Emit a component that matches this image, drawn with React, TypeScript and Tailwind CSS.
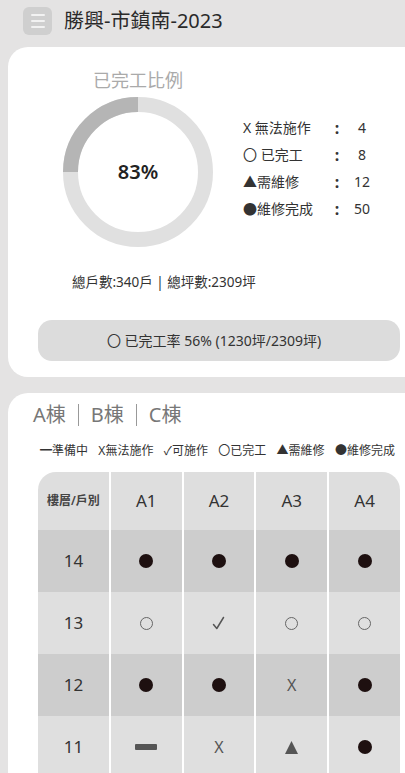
import React from 'react';

type Mark = 'dot' | 'circle' | 'check' | 'x' | 'tri' | 'dash';

const floors: { floor: number; cells: Mark[] }[] = [
  { floor: 14, cells: ['dot', 'dot', 'dot', 'dot'] },
  { floor: 13, cells: ['circle', 'check', 'circle', 'circle'] },
  { floor: 12, cells: ['dot', 'dot', 'x', 'dot'] },
  { floor: 11, cells: ['dash', 'x', 'tri', 'dot'] },
];

const stats = [
  { label: 'X 無法施作', value: '4' },
  { label: '〇 已完工', value: '8' },
  { label: '▲需維修', value: '12' },
  { label: '●維修完成', value: '50' },
];

const legend = ['━準備中', 'X無法施作', '✓可施作', '〇已完工', '▲需維修', '●維修完成'];

const MarkIcon: React.FC<{ mark: Mark }> = ({ mark }) => {
  switch (mark) {
    case 'dot':
      return <span className="block h-[14px] w-[14px] rounded-full bg-[#1e1010]" />;
    case 'circle':
      return <span className="block h-[13px] w-[13px] rounded-full border border-[#666]" />;
    case 'check':
      return (
        <svg width="13" height="14" viewBox="0 0 13 14" fill="none">
          <path d="M1.5 8.5 L4.8 12.5 L11.5 1.5" stroke="#555" strokeWidth="1.5" strokeLinecap="round" strokeLinejoin="round" />
        </svg>
      );
    case 'x':
      return <span className="text-[16px] leading-none text-[#555]">X</span>;
    case 'tri':
      return (
        <svg width="13" height="13" viewBox="0 0 13 13">
          <polygon points="6.5,0 13,13 0,13" fill="#555" />
        </svg>
      );
    case 'dash':
      return <span className="block h-[6px] w-[22px] rounded-[1px] bg-[#555]" />;
  }
};

export default function App() {
  return (
    <div className="min-h-screen bg-[#e4e3e3] font-['Noto_Sans','Noto_Sans_CJK_TC',sans-serif] text-[#333]">
      {/* Header */}
      <header className="h-[47px] pl-[23px] pt-[7px]">
        <div className="flex h-[28px] items-center gap-[12px]">
          <div className="flex h-[28px] w-[29px] flex-col items-center justify-center gap-[4px] rounded-[6px] bg-[#cfcfcf]">
            <span className="h-[2px] w-[14px] rounded bg-[#f2f2f2]" />
            <span className="h-[2px] w-[14px] rounded bg-[#f2f2f2]" />
            <span className="h-[2px] w-[14px] rounded bg-[#f2f2f2]" />
          </div>
          <h1 className="text-[20px] leading-none text-[#2a2a2a]">勝興-市鎮南-2023</h1>
        </div>
      </header>

      {/* Completion card */}
      <section className="ml-[8px] rounded-l-[20px] bg-white pb-[16px] pl-[30px] pr-[5px] pt-[21px]">
        <h2 className="ml-[55px] text-[18px] leading-[24px] text-[#aaa]">已完工比例</h2>

        <div className="mt-[5px] flex">
          <div className="relative ml-[25px] h-[150px] w-[150px]">
            <svg width="150" height="150" viewBox="0 0 150 150">
              <circle cx="75" cy="75" r="67.5" fill="none" stroke="#e0e0e0" strokeWidth="15" />
              <path d="M75 7.5 A67.5 67.5 0 0 0 7.5 75" fill="none" stroke="#b5b5b5" strokeWidth="15" />
            </svg>
            <div className="absolute inset-0 flex items-center justify-center text-[20px] font-semibold text-[#222]">
              83%
            </div>
          </div>

          <div className="ml-[30px] mt-[17px]">
            {stats.map((s) => (
              <div key={s.label} className="flex h-[27px] items-center text-[14px]">
                <span className="w-[84px]">{s.label}</span>
                <span className="w-[20px] text-center text-[16px] font-bold">:</span>
                <span className="w-[30px] text-center">{s.value}</span>
              </div>
            ))}
          </div>
        </div>

        <p className="ml-[34px] mt-[25px] text-[13.5px] leading-[20px]">總戶數:340戶 | 總坪數:2309坪</p>

        <div className="mt-[28px] flex h-[41px] items-center justify-center rounded-[14px] bg-[#dcdcdc] pr-[10px] text-[14px]">
          〇 已完工率 56% (1230坪/2309坪)
        </div>
      </section>

      {/* Building card */}
      <section className="ml-[8px] mt-[16px] rounded-tl-[20px] bg-white pl-[30px] pr-[5px] pt-[8px]">
        <h2 className="-ml-[5px] flex items-center text-[20px] leading-[28px] text-[#777]">
          <span>A棟</span>
          <span className="mx-[12px] h-[22px] w-px bg-[#999]" />
          <span>B棟</span>
          <span className="mx-[12px] h-[22px] w-px bg-[#999]" />
          <span>C棟</span>
        </h2>

        <div className="ml-[2px] mr-[5px] mt-[14px] flex justify-between text-[12px] leading-[16px]">
          {legend.map((l) => (
            <span key={l}>{l}</span>
          ))}
        </div>

        <div className="mt-[13px]">
          <div className="flex h-[58px] gap-[2px]">
            <div className="flex flex-1 items-center justify-center rounded-tl-[18px] bg-[#dedede] text-[12px] font-semibold text-[#444]">
              樓層/戶別
            </div>
            {['A1', 'A2', 'A3', 'A4'].map((h, i) => (
              <div
                key={h}
                className={`flex flex-1 items-center justify-center bg-[#dedede] text-[17px] ${
                  i === 3 ? 'rounded-tr-[18px]' : ''
                }`}
              >
                {h}
              </div>
            ))}
          </div>

          {floors.map((row, r) => (
            <div key={row.floor} className="flex h-[62px] gap-[2px]">
              <div
                className={`flex flex-1 items-center justify-center text-[17px] ${
                  r % 2 === 0 ? 'bg-[#cdcdcd]' : 'bg-[#dfdfdf]'
                }`}
              >
                {row.floor}
              </div>
              {row.cells.map((c, i) => (
                <div
                  key={i}
                  className={`flex flex-1 items-center justify-center ${
                    r % 2 === 0 ? 'bg-[#cdcdcd]' : 'bg-[#dfdfdf]'
                  }`}
                >
                  <MarkIcon mark={c} />
                </div>
              ))}
            </div>
          ))}
        </div>
      </section>
    </div>
  );
}
